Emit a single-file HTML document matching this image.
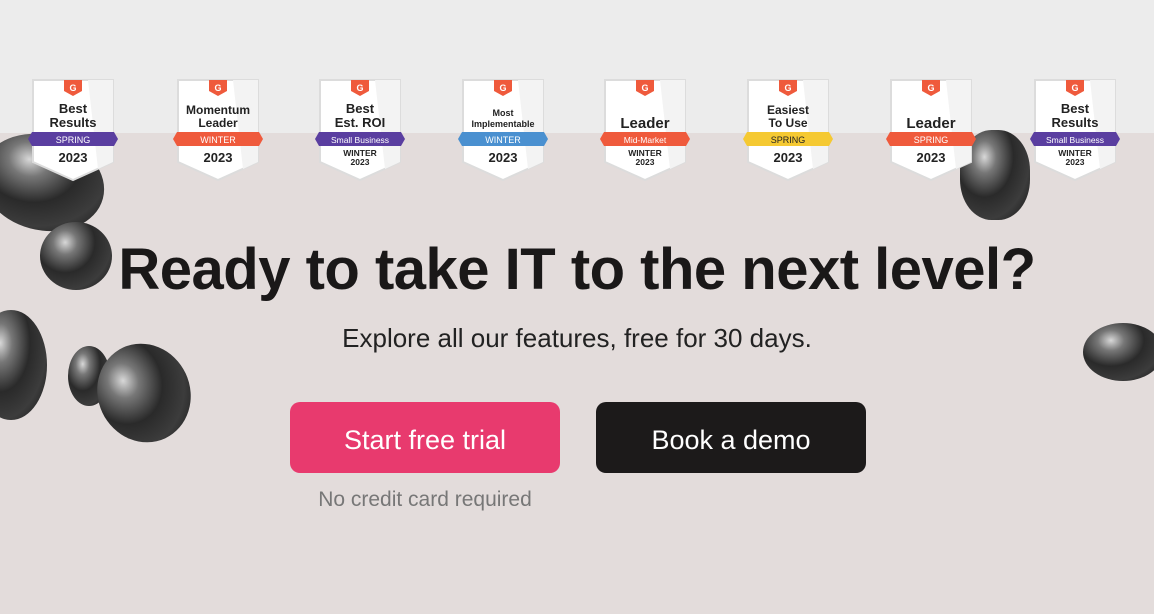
<!DOCTYPE html>
<html><head><style>
body{margin:0;width:1154px;height:614px;overflow:hidden;background:#e3dcdb;font-family:"Liberation Sans",sans-serif;position:relative}
.top{position:absolute;left:0;top:0;width:1154px;height:133px;background:#ececec}
.b{position:absolute;top:79px;width:90px;height:104px}
.stone{position:absolute;border-radius:50%;background:radial-gradient(ellipse at 35% 30%,#d8d8d8 0%,#777 18%,#2a2a2a 45%,#3c3c3c 70%,#111 100%)}
h1{position:absolute;top:236px;left:0;width:1154px;text-align:center;margin:0;font-size:58px;font-weight:bold;color:#1a1818;letter-spacing:-0.5px}
.sub{position:absolute;top:323px;left:0;width:1154px;text-align:center;font-size:26px;color:#222}
.btn{position:absolute;top:402px;width:270px;height:71px;border-radius:10px;color:#fff;font-size:27px;text-align:center;line-height:76px}
.nc{position:absolute;top:488px;left:290px;width:270px;text-align:center;font-size:21px;color:#777}
</style></head><body>
<div class="top"></div>
<div class="stone" style="left:-20px;top:135px;width:125px;height:95px;transform:rotate(15deg)"></div>
<div class="stone" style="left:40px;top:222px;width:72px;height:68px"></div>
<div class="stone" style="left:-25px;top:310px;width:72px;height:110px"></div>
<div class="stone" style="left:68px;top:346px;width:42px;height:60px"></div>
<div class="stone" style="left:98px;top:343px;width:92px;height:100px;transform:rotate(-25deg)"></div>
<div class="stone" style="left:960px;top:130px;width:70px;height:90px;border-radius:45%"></div>
<div class="stone" style="left:1083px;top:323px;width:80px;height:58px"></div>

<svg width="0" height="0" style="position:absolute"><defs>
<g id="sh"><polygon points="5,1 85,1 85,83 45,101 5,83" fill="#fff" stroke="#dcdcdc" stroke-width="2"/><polygon points="60,1 85,1 85,83 70,90" fill="#f3f3f3"/>
<path d="M36 1h18v11l-9 5l-9-5z" fill="#ef5a3c"/><text x="45" y="12" font-size="9" font-weight="bold" fill="#fff" text-anchor="middle" font-family="Liberation Sans">G</text></g>
</defs></svg>
<svg class="b" style="left:28px" viewBox="0 0 90 104"><use href="#sh"/><text x="45" y="34" font-size="13" font-weight="bold" text-anchor="middle" fill="#222">Best</text><text x="45" y="48" font-size="13" font-weight="bold" text-anchor="middle" fill="#222">Results</text><path d="M4 53h82l4 7l-4 7h-82l-4-7z" fill="#5a3ea0"/><text x="45" y="64" font-size="9" text-anchor="middle" fill="#fff">SPRING</text><text x="45" y="83" font-size="13" font-weight="bold" text-anchor="middle" fill="#222">2023</text></svg>
<svg class="b" style="left:173px" viewBox="0 0 90 104"><use href="#sh"/><text x="45" y="35" font-size="12" font-weight="bold" text-anchor="middle" fill="#222">Momentum</text><text x="45" y="48" font-size="12" font-weight="bold" text-anchor="middle" fill="#222">Leader</text><path d="M4 53h82l4 7l-4 7h-82l-4-7z" fill="#ef5a3c"/><text x="45" y="64" font-size="9" text-anchor="middle" fill="#fff">WINTER</text><text x="45" y="83" font-size="13" font-weight="bold" text-anchor="middle" fill="#222">2023</text></svg>
<svg class="b" style="left:315px" viewBox="0 0 90 104"><use href="#sh"/><text x="45" y="34" font-size="13" font-weight="bold" text-anchor="middle" fill="#222">Best</text><text x="45" y="48" font-size="13" font-weight="bold" text-anchor="middle" fill="#222">Est. ROI</text><path d="M4 53h82l4 7l-4 7h-82l-4-7z" fill="#5a3ea0"/><text x="45" y="64" font-size="8.5" text-anchor="middle" fill="#fff">Small Business</text><text x="45" y="77" font-size="8.5" font-weight="bold" text-anchor="middle" fill="#222">WINTER</text><text x="45" y="86" font-size="8.5" font-weight="bold" text-anchor="middle" fill="#222">2023</text></svg>
<svg class="b" style="left:458px" viewBox="0 0 90 104"><use href="#sh"/><text x="45" y="37" font-size="9" font-weight="bold" text-anchor="middle" fill="#222">Most</text><text x="45" y="48" font-size="9" font-weight="bold" text-anchor="middle" fill="#222">Implementable</text><path d="M4 53h82l4 7l-4 7h-82l-4-7z" fill="#4a90d0"/><text x="45" y="64" font-size="9" text-anchor="middle" fill="#fff">WINTER</text><text x="45" y="83" font-size="13" font-weight="bold" text-anchor="middle" fill="#222">2023</text></svg>
<svg class="b" style="left:600px" viewBox="0 0 90 104"><use href="#sh"/><text x="45" y="49" font-size="15" font-weight="bold" text-anchor="middle" fill="#222">Leader</text><path d="M4 53h82l4 7l-4 7h-82l-4-7z" fill="#ef5a3c"/><text x="45" y="64" font-size="8.5" text-anchor="middle" fill="#fff">Mid-Market</text><text x="45" y="77" font-size="8.5" font-weight="bold" text-anchor="middle" fill="#222">WINTER</text><text x="45" y="86" font-size="8.5" font-weight="bold" text-anchor="middle" fill="#222">2023</text></svg>
<svg class="b" style="left:743px" viewBox="0 0 90 104"><use href="#sh"/><text x="45" y="35" font-size="12" font-weight="bold" text-anchor="middle" fill="#222">Easiest</text><text x="45" y="48" font-size="12" font-weight="bold" text-anchor="middle" fill="#222">To Use</text><path d="M4 53h82l4 7l-4 7h-82l-4-7z" fill="#f5c932"/><text x="45" y="64" font-size="9" text-anchor="middle" fill="#222">SPRING</text><text x="45" y="83" font-size="13" font-weight="bold" text-anchor="middle" fill="#222">2023</text></svg>
<svg class="b" style="left:886px" viewBox="0 0 90 104"><use href="#sh"/><text x="45" y="49" font-size="15" font-weight="bold" text-anchor="middle" fill="#222">Leader</text><path d="M4 53h82l4 7l-4 7h-82l-4-7z" fill="#ef5a3c"/><text x="45" y="64" font-size="9" text-anchor="middle" fill="#fff">SPRING</text><text x="45" y="83" font-size="13" font-weight="bold" text-anchor="middle" fill="#222">2023</text></svg>
<svg class="b" style="left:1030px" viewBox="0 0 90 104"><use href="#sh"/><text x="45" y="34" font-size="13" font-weight="bold" text-anchor="middle" fill="#222">Best</text><text x="45" y="48" font-size="13" font-weight="bold" text-anchor="middle" fill="#222">Results</text><path d="M4 53h82l4 7l-4 7h-82l-4-7z" fill="#5a3ea0"/><text x="45" y="64" font-size="8.5" text-anchor="middle" fill="#fff">Small Business</text><text x="45" y="77" font-size="8.5" font-weight="bold" text-anchor="middle" fill="#222">WINTER</text><text x="45" y="86" font-size="8.5" font-weight="bold" text-anchor="middle" fill="#222">2023</text></svg>

<h1>Ready to take IT to the next level?</h1>
<div class="sub">Explore all our features, free for 30 days.</div>
<div class="btn" style="left:290px;background:#e83a6e">Start free trial</div>
<div class="btn" style="left:596px;background:#1c1a1a">Book a demo</div>
<div class="nc">No credit card required</div>
</body></html>
